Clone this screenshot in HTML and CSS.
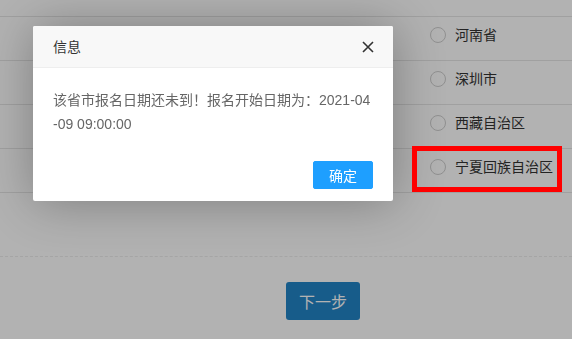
FILE: index.html
```html
<!DOCTYPE html>
<html lang="zh-CN">
<head>
    <meta charset="UTF-8">
    <meta name="viewport" content="width=device-width, initial-scale=1.0">
    <title>选择地区</title>
    <link rel="stylesheet" href="styles.css">
</head>
<body>
    <div class="page">
        <ul class="area-list">
            <li class="area-row"></li>
            <li class="area-row"><span class="radio"></span>河南省</li>
            <li class="area-row"><span class="radio"></span>深圳市</li>
            <li class="area-row"><span class="radio"></span>西藏自治区</li>
            <li class="area-row"><span class="radio"></span>宁夏回族自治区</li>
        </ul>
        <div class="divider"></div>
        <div class="actions">
            <button class="btn-next">下一步</button>
        </div>
    </div>

    <div class="shade"></div>

    <div class="layer">
        <div class="layer-title">
            信息
            <span class="layer-close">
                <svg width="12" height="12" viewBox="0 0 12 12">
                    <path d="M1 1 L11 11 M11 1 L1 11" stroke="#333" stroke-width="1.6" fill="none"/>
                </svg>
            </span>
        </div>
        <div class="layer-content">该省市报名日期还未到！报名开始日期为：2021-04-09 09:00:00</div>
        <div class="layer-btns">
            <button class="layer-btn">确定</button>
        </div>
    </div>

    <div class="mark"></div>
</body>
</html>
```

FILE: styles.css
```css
body {
    margin: 0;
    padding: 0;
    background-color: #fff;
    font-family: "Liberation Sans", "Noto Sans CJK SC", sans-serif;
    font-size: 14px;
    color: #333;
    height: 339px;
    overflow: hidden;
}
.page {
    width: 100%;
}
.area-list {
    list-style: none;
    margin: -27px 0 0 0;
    padding: 0;
}
.area-row {
    height: 43px;
    border-bottom: 1px solid #e6e6e6;
    padding: 0 0 0 430px;
    display: flex;
    align-items: flex-start;
    line-height: 20px;
}
.area-row:not(:first-child) {
    padding-top: 8px;
    height: 35px;
}
.area-row .radio {
    width: 14px;
    height: 14px;
    border: 1px solid #cfcfcf;
    border-radius: 50%;
    margin: 2px 9px 0 0;
}
.divider {
    margin-top: 63px;
    border-top: 1px dashed #ececec;
}
.actions {
    padding: 25px 0 0 50%;
}
.btn-next {
    width: 74px;
    height: 38px;
    border: none;
    border-radius: 3px;
    background-color: #2184c6;
    color: #fff;
    font-size: 16px;
    font-family: "Liberation Sans", "Noto Sans CJK SC", sans-serif;
}
.shade {
    position: fixed;
    top: 0;
    left: 0;
    right: 0;
    bottom: 0;
    background-color: rgba(0, 0, 0, 0.3);
}
.layer {
    position: absolute;
    top: 26px;
    left: 33px;
    width: 360px;
    background-color: #fff;
    border-radius: 2px;
    box-shadow: 1px 1px 50px rgba(0, 0, 0, 0.3);
}
.layer-title {
    position: relative;
    height: 41px;
    line-height: 42px;
    padding: 0 80px 0 20px;
    background-color: #f8f8f8;
    border-bottom: 1px solid #eee;
    border-radius: 2px 2px 0 0;
    color: #333;
}
.layer-close {
    position: absolute;
    right: 19px;
    top: 15px;
    width: 12px;
    height: 12px;
    line-height: 0;
}
.layer-content {
    padding: 20px;
    line-height: 24px;
    color: #666;
    word-break: break-all;
}
.layer-btns {
    text-align: right;
    padding: 0 15px 12px;
}
.layer-btn {
    height: 28px;
    margin: 5px 5px 0;
    padding: 0 15px;
    border: 1px solid #1e9fff;
    border-radius: 2px;
    background-color: #1e9fff;
    color: #fff;
    font-size: 14px;
    font-family: "Liberation Sans", "Noto Sans CJK SC", sans-serif;
}
.mark {
    position: absolute;
    left: 412px;
    top: 146px;
    width: 140px;
    height: 36px;
    border: 5px solid #ff0000;
}
```
